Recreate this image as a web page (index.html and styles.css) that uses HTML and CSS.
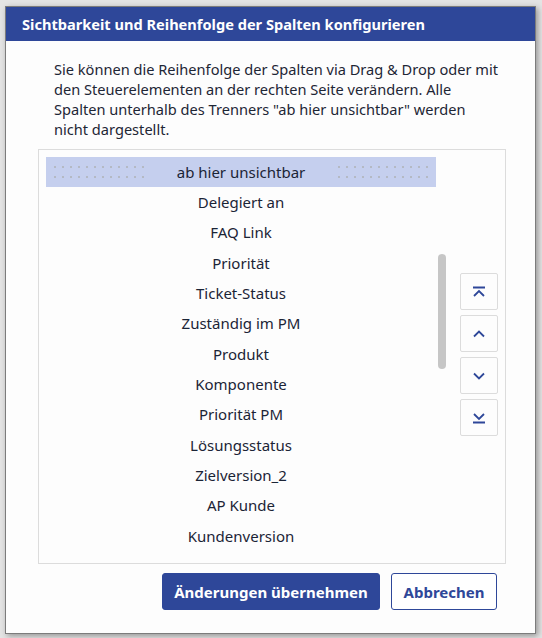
FILE: index.html
```html
<!DOCTYPE html>
<html lang="de">
<head>
<meta charset="utf-8">
<title>Spalten konfigurieren</title>
<link rel="stylesheet" href="styles.css">
</head>
<body>
<div class="dialog">
  <div class="dialog-header">Sichtbarkeit und Reihenfolge der Spalten konfigurieren</div>
  <div class="dialog-body">
    <p class="intro">Sie können die Reihenfolge der Spalten via Drag &amp; Drop oder mit den Steuerelementen an der rechten Seite verändern. Alle Spalten unterhalb des Trenners "ab hier unsichtbar" werden nicht dargestellt.</p>
    <div class="listbox">
      <div class="list-scroll">
        <ul class="items">
          <li class="item selected"><span class="dots"></span><span class="label">ab hier unsichtbar</span><span class="dots"></span></li>
          <li class="item"><span class="label">Delegiert an</span></li>
          <li class="item"><span class="label">FAQ Link</span></li>
          <li class="item"><span class="label">Priorität</span></li>
          <li class="item"><span class="label">Ticket-Status</span></li>
          <li class="item"><span class="label">Zuständig im PM</span></li>
          <li class="item"><span class="label">Produkt</span></li>
          <li class="item"><span class="label">Komponente</span></li>
          <li class="item"><span class="label">Priorität PM</span></li>
          <li class="item"><span class="label">Lösungsstatus</span></li>
          <li class="item"><span class="label">Zielversion_2</span></li>
          <li class="item"><span class="label">AP Kunde</span></li>
          <li class="item"><span class="label">Kundenversion</span></li>
        </ul>
        <div class="scrollbar"><div class="thumb"></div></div>
      </div>
      <div class="controls">
        <button class="ctl" title="Nach ganz oben">
          <svg width="14" height="12" viewBox="0 0 14 12"><path d="M1 1.5H13M2 10L7 5L12 10" fill="none" stroke="#2e4799" stroke-width="1.8"/></svg>
        </button>
        <button class="ctl" title="Nach oben">
          <svg width="14" height="12" viewBox="0 0 14 12"><path d="M2 8.5L7 3.5L12 8.5" fill="none" stroke="#2e4799" stroke-width="1.8"/></svg>
        </button>
        <button class="ctl" title="Nach unten">
          <svg width="14" height="12" viewBox="0 0 14 12"><path d="M2 3.5L7 8.5L12 3.5" fill="none" stroke="#2e4799" stroke-width="1.8"/></svg>
        </button>
        <button class="ctl" title="Nach ganz unten">
          <svg width="14" height="12" viewBox="0 0 14 12"><path d="M2 2L7 7L12 2M1 10.5H13" fill="none" stroke="#2e4799" stroke-width="1.8"/></svg>
        </button>
      </div>
    </div>
    <div class="footer">
      <button class="btn primary">Änderungen übernehmen</button>
      <button class="btn secondary">Abbrechen</button>
    </div>
  </div>
</div>
</body>
</html>
```

FILE: styles.css
```css
* { box-sizing: border-box; }

html, body { height: 100%; }

body {
  margin: 0;
  padding: 6px 6px 4px 5px;
  background: #e4e4e4;
  font-family: "Noto Sans", "Open Sans", sans-serif;
  color: #1f2937;
}

.dialog {
  width: 531px;
  height: 628px;
  background: #fdfdfd;
  border: 1px solid #7c7c7c;
  box-shadow: 2px 2px 6px rgba(0, 0, 0, 0.35);
  display: flex;
  flex-direction: column;
}

.dialog-header {
  height: 34px;
  background: #2e4799;
  color: #ffffff;
  font-weight: 700;
  font-size: 14.6px;
  line-height: 34px;
  padding-left: 16px;
}

.dialog-body {
  padding: 18px 29px 0 32px;
  display: flex;
  flex-direction: column;
}

.intro {
  margin: 0 0 0 16px;
  width: 448px;
  font-size: 14.6px;
  line-height: 20px;
  color: #1e2635;
}

.listbox {
  margin-top: 10px;
  width: 468px;
  height: 415px;
  border: 1px solid #dcdcdc;
  padding: 7px;
  display: flex;
  gap: 14px;
}

.list-scroll {
  width: 400px;
  height: 399px;
  display: flex;
  overflow: hidden;
}

.items {
  list-style: none;
  margin: 0;
  padding: 0;
  width: 390px;
  flex: none;
}

.item {
  height: 30.33px;
  display: flex;
  align-items: center;
  justify-content: center;
  font-size: 15px;
  color: #1b2436;
}

.item.selected {
  height: 30px;
  background: #c5cfee;
  justify-content: space-between;
  padding: 0 5px;
}

.dots {
  width: 96px;
  height: 20px;
  background-image: radial-gradient(circle, #b4b9c4 1px, transparent 1.4px);
  background-size: 8px 10px;
  background-position: 0 0;
}

.scrollbar {
  width: 10px;
  flex: none;
  margin: 2px 0 2px 2px;
  border-right: 2px solid #e2e2e2;
}

.thumb {
  margin-top: 95px;
  width: 8px;
  height: 115px;
  background: #c6c6c6;
  border-radius: 4px;
}

.controls {
  display: flex;
  flex-direction: column;
  gap: 5px;
  padding-top: 116px;
}

.ctl {
  width: 38px;
  height: 37px;
  border: 1px solid #dcdcdc;
  border-radius: 2px;
  background: #fdfdfd;
  display: flex;
  align-items: center;
  justify-content: center;
  padding: 0;
}

.footer {
  margin-top: 9px;
  display: flex;
  justify-content: flex-end;
  gap: 11px;
  padding-right: 9px;
}

.btn {
  height: 37px;
  font-family: "Noto Sans", "Open Sans", sans-serif;
  font-weight: 700;
  font-size: 15px;
  border-radius: 3px;
  padding: 0 10px;
}

.primary {
  background: #2e4799;
  color: #ffffff;
  border: 1px solid #2e4799;
  width: 218px;
}

.secondary {
  background: #ffffff;
  color: #2e4799;
  border: 1px solid #2e4799;
  width: 106px;
}
```
